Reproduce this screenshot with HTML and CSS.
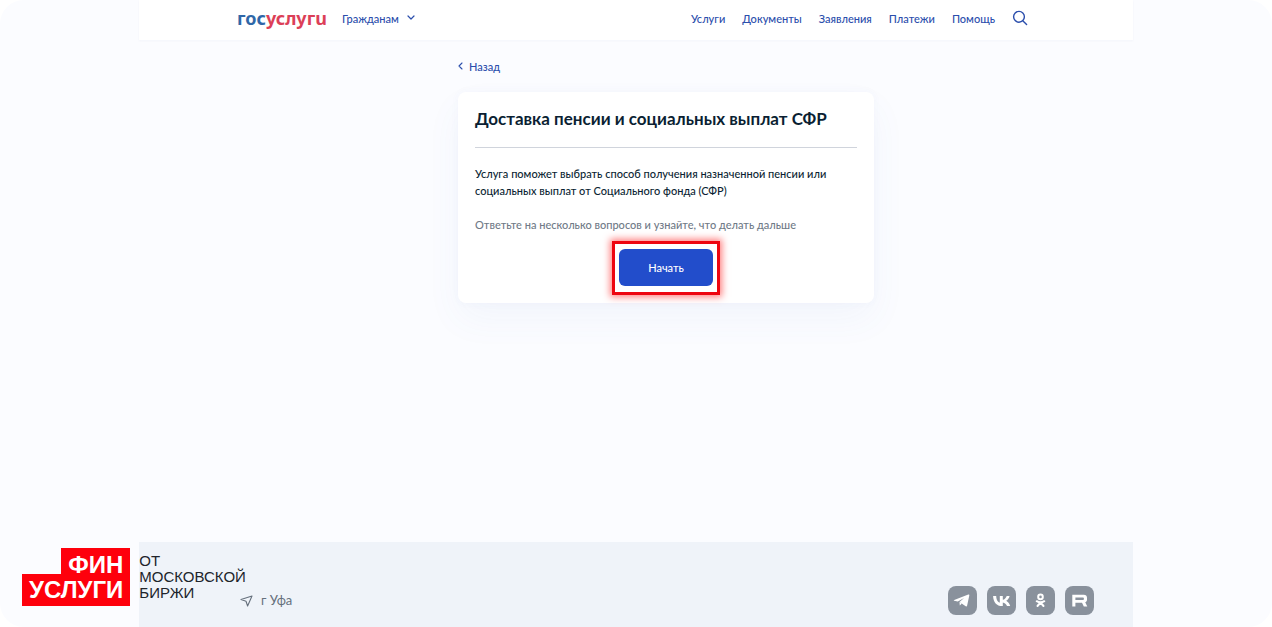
FILE: index.html
```html
<!DOCTYPE html>
<html lang="ru">
<head>
    <meta charset="UTF-8">
    <meta name="viewport" content="width=device-width, initial-scale=1.0">
    <title>Доставка пенсии и социальных выплат СФР</title>
    <link rel="stylesheet" href="styles.css">
</head>
<body>
    <div class="page">

        <!-- Шапка -->
        <header class="header">
            <a href="#" class="logo" aria-label="госуслуги"><span class="logo-blue">гос</span><span class="logo-red">услугu</span></a>
            <button type="button" class="audience">
                Гражданам
                <svg width="8" height="6" viewBox="0 0 8 6" fill="none" stroke="currentColor" stroke-width="1.2" stroke-linecap="round" stroke-linejoin="round"><path d="M1 1l3 3 3-3"/></svg>
            </button>
            <nav class="nav">
                <a href="#">Услуги</a>
                <a href="#">Документы</a>
                <a href="#">Заявления</a>
                <a href="#">Платежи</a>
                <a href="#">Помощь</a>
            </nav>
            <button type="button" class="search" aria-label="Поиск">
                <svg width="16" height="16" viewBox="0 0 16 16" fill="none" stroke="currentColor" stroke-width="1.4" stroke-linecap="round"><circle cx="7" cy="6.800" r="5.400"/><path d="M11 11l3.600 3.600"/></svg>
            </button>
        </header>

        <!-- Карточка услуги -->
        <main class="main">
            <div class="content">
                <a href="#" class="back">
                    <svg width="5" height="8" viewBox="0 0 5 8" fill="none" stroke="currentColor" stroke-width="1.1" stroke-linecap="round" stroke-linejoin="round"><path d="M4 1L1 4l3 3"/></svg>
                    Назад
                </a>
                <section class="card">
                    <h1>Доставка пенсии и социальных выплат СФР</h1>
                    <p>Услуга поможет выбрать способ получения назначенной пенсии или социальных выплат от Социального фонда (СФР)</p>
                    <p class="hint">Ответьте на несколько вопросов и узнайте, что делать дальше</p>
                    <div class="highlight">
                        <button type="button" class="start">Начать</button>
                    </div>
                </section>
            </div>
        </main>

        <!-- Подвал -->
        <footer class="footer">
            <a href="#" class="city">
                <svg width="13" height="12" viewBox="0 0 13 12" fill="none" stroke="currentColor" stroke-width="1.1" stroke-linejoin="round"><path d="M1 4.6L12 1 7.6 11 6 6.3z"/></svg>
                г Уфа
            </a>
            <div class="socials">
                <a href="#" aria-label="Telegram">
                    <svg viewBox="0 0 29 29"><path d="M6.200 14.100L20.300 8.500c.8-.3 1.200.1 1 .9l-2.200 10.300c-.2.8-.7 1-1.400.6l-6.200-4.400 4.600-4-6.300 3.500-3.600-.6c-.6-.2-.6-.5 0-.7z"/><path d="M11.500 15.900l2.300 1.700-2 2z"/></svg>
                </a>
                <a href="#" aria-label="ВКонтакте">
                    <svg viewBox="0 0 29 29"><path d="M15.200 20C9.700 20 6.300 16.200 6.100 9.900h3.100c.1 4.400 2 6.200 3.600 6.600V9.900h3v3.800c1.700-.2 3.300-1.900 3.900-3.800h2.900c-.5 2.400-2.200 4.100-3.500 4.900 1.300.6 3.300 2.200 4.100 5.200H20c-.7-1.900-2.200-3.400-4.200-3.600V20z"/></svg>
                </a>
                <a href="#" aria-label="Одноклассники">
                    <svg viewBox="0 0 29 29" class="icon-line"><circle cx="14.500" cy="10.900" r="2.300"/><path d="M10.700 15.200c2.400 1.500 5.200 1.500 7.600 0M14.500 16.500l-3 3.500M14.500 16.500l3 3.500"/></svg>
                </a>
                <a href="#" aria-label="Rutube">
                    <svg viewBox="0 0 29 29"><path fill-rule="evenodd" d="M7.300 8.800h11.500c2 0 3.200 1 3.200 3v1.700c0 1.400-.6 2.400-1.800 2.800l2.100 4.200h-3.500L17 16.800h-6.600v3.700H7.300zM10.400 11.600v2.500h7.600c.6 0 .9-.3.900-.8v-.9c0-.5-.3-.8-.9-.8z"/></svg>
                </a>
            </div>
        </footer>
    </div>

    <!-- Логотип поверх страницы -->
    <div class="brand">
        <div class="brand-mark">
            <span>ФИН</span>
            <span>УСЛУГИ</span>
        </div>
        <div class="brand-text">ОТ<br>МОСКОВСКОЙ<br>БИРЖИ</div>
    </div>
</body>
</html>
```
FILE: styles.css
```css
* {
    margin: 0;
    padding: 0;
    box-sizing: border-box;
}

body {
    position: relative;
    min-height: 100vh;
    background: #fff;
    color: #0b1f33;
    font-family: Lato, "Noto Sans", sans-serif;
    font-size: 11px;
    font-weight: 500;
    line-height: 17px;
}

a {
    color: inherit;
    text-decoration: none;
}

button {
    border: none;
    background: none;
    color: inherit;
    font: inherit;
    cursor: pointer;
}

svg {
    display: block;
}

.page {
    display: flex;
    flex-direction: column;
    align-items: center;
    min-height: 100vh;
    background: #fbfcff;
    border-radius: 24px;
    overflow: hidden;
}

/* Шапка */
.header {
    display: flex;
    align-items: center;
    width: 100%;
    max-width: 994px;
    height: 40px;
    padding: 0 105px 4px 98px;
    background: #fff;
    box-shadow: 0 1px 2px rgba(60, 80, 150, 0.04);
    color: #2b4eac;
}

.logo {
    font-family: "Noto Sans", sans-serif;
    font-size: 18px;
    font-weight: 700;
    line-height: 24px;
}

.logo-blue {
    color: #2f67a8;
}

.logo-red {
    color: #dc3f58;
}

.audience {
    display: flex;
    align-items: center;
    gap: 8px;
    margin-left: 15px;
}

.nav {
    display: flex;
    gap: 17px;
    margin-left: auto;
}

.search {
    margin-left: 17px;
}

/* Основная часть */
.main {
    display: flex;
    justify-content: center;
    flex: 1;
    width: 100%;
    max-width: 994px;
    padding: 17px 0 40px 60px;
}

.content {
    width: 100%;
    max-width: 416px;
}

.back {
    display: inline-flex;
    align-items: center;
    gap: 6px;
    color: #2b4eac;
}

.card {
    margin-top: 17px;
    padding: 16px 17px 18px;
    background: #fff;
    border-radius: 8px;
    box-shadow: 0 16px 36px rgba(80, 110, 190, 0.05), 0 0 8px rgba(80, 110, 190, 0.04);
}

.card h1 {
    margin-bottom: 17px;
    padding-bottom: 17px;
    border-bottom: 1px solid #d0d4dc;
    font-size: 17px;
    line-height: 22px;
}

.card p {
    margin-bottom: 17px;
}

.card .hint {
    margin-bottom: 8px;
    color: #707a87;
}

.highlight {
    width: 108px;
    margin: 0 auto -10px;
    padding: 5px 4px 6px;
    border: 3px solid #ee0510;
    box-shadow: 0 0 7px 2px rgba(255, 0, 0, 0.5);
}

.start {
    display: block;
    width: 100%;
    height: 37px;
    border-radius: 6px;
    background: #224dcb;
    color: #fff;
}

/* Подвал */
.footer {
    display: flex;
    justify-content: space-between;
    align-items: center;
    width: 100%;
    max-width: 994px;
    padding: 44px 39px 12px 101px;
    background: #eff3f9;
}

.city {
    display: flex;
    align-items: center;
    gap: 8px;
    color: #66707d;
    font-size: 13px;
    font-weight: 400;
}

.socials {
    display: flex;
    gap: 10px;
}

.socials a {
    width: 29px;
    height: 29px;
    border-radius: 8px;
    background: #89919c;
    fill: #fff;
}

.socials .icon-line {
    fill: none;
    stroke: #fff;
    stroke-width: 2;
    stroke-linecap: round;
    stroke-linejoin: round;
}

/* Логотип поверх страницы */
.brand {
    position: absolute;
    left: 22px;
    bottom: 21px;
    display: flex;
    gap: 9px;
    font-family: "Liberation Sans", sans-serif;
}

.brand-mark {
    display: flex;
    flex-direction: column;
    align-items: flex-end;
    color: #fff;
    font-size: 24px;
    font-weight: 700;
    line-height: 26px;
}

.brand-mark span {
    padding: 3px 7px;
    background: #fe000c;
}

.brand-mark span:first-child {
    padding: 4px 7px 0;
    margin-bottom: -4px;
}

.brand-text {
    padding-top: 5px;
    color: #20242b;
    font-size: 15px;
    line-height: 16px;
}
```
